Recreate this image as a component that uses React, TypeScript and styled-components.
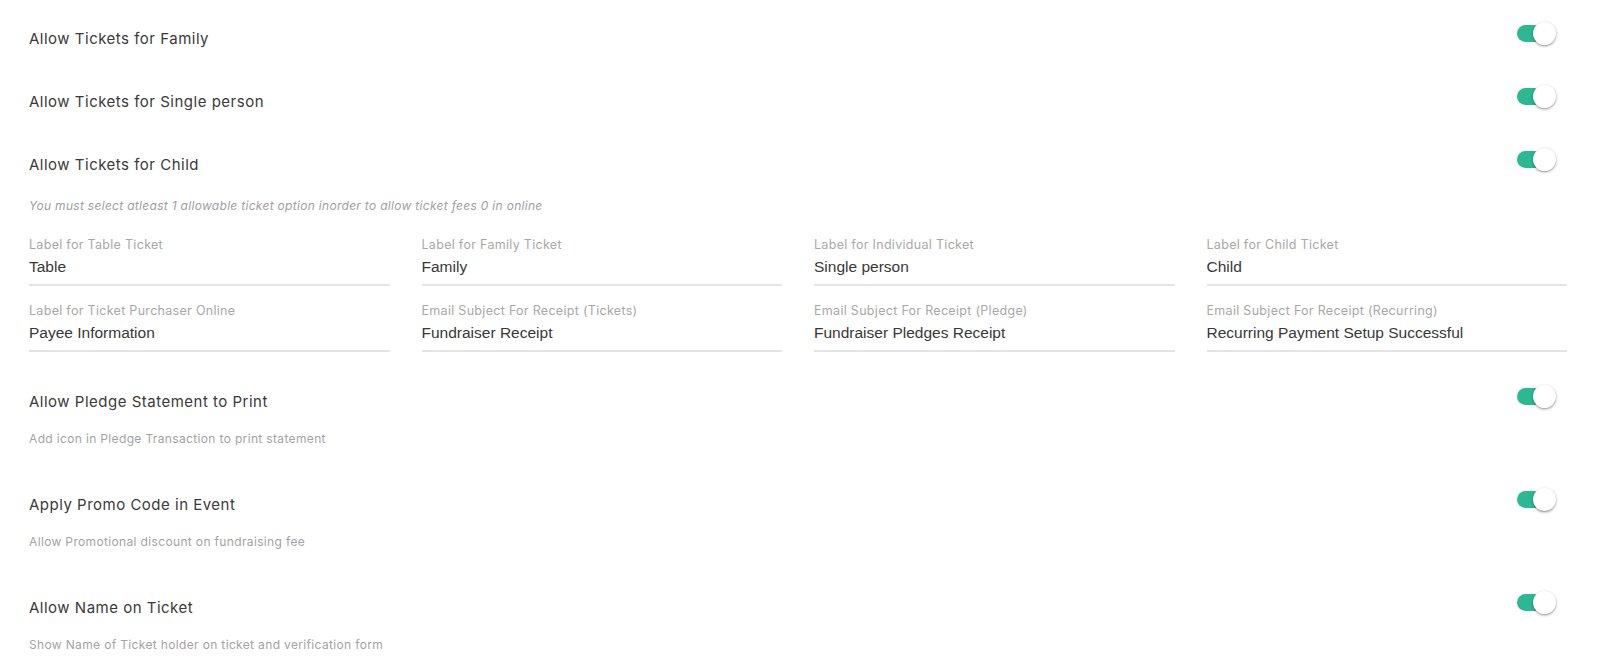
import { useState } from "react"
import styled, { createGlobalStyle } from "styled-components"

const GlobalStyle = createGlobalStyle`
  html, body {
    margin: 0;
    padding: 0;
    background: #ffffff;
  }
  body {
    font-family: Inter, "Noto Sans", sans-serif;
    color: #333;
  }
`

const Page = styled.div`
  width: 1600px;
  box-sizing: border-box;
  padding: 28px 33px 0 29px;
`

const SwitchRow = styled.div<{ $gap: number }>`
  display: flex;
  align-items: flex-start;
  justify-content: space-between;
  margin-bottom: ${(p) => p.$gap}px;
`

const RowText = styled.div`
  display: flex;
  flex-direction: column;
`

const RowTitle = styled.div`
  font-size: 15px;
  line-height: 22px;
  color: #3a3a3a;
  letter-spacing: 0.5px;
`

const RowDesc = styled.div`
  margin-top: 17px;
  font-size: 12px;
  line-height: 18px;
  color: #a3a3a3;
  letter-spacing: 0.35px;
`

const Hint = styled.div`
  font-size: 12px;
  line-height: 18px;
  font-style: italic;
  color: #a0a0a0;
  letter-spacing: 0.3px;
  margin-bottom: 21px;
`

const Track = styled.button<{ $on: boolean }>`
  position: relative;
  flex: none;
  width: 34px;
  height: 17px;
  margin: -3px 16px 0 0;
  padding: 0;
  border: none;
  border-radius: 9px;
  background: ${(p) => (p.$on ? "#2db894" : "#c8c8c8")};
  cursor: pointer;
`

const Thumb = styled.span<{ $on: boolean }>`
  position: absolute;
  top: -3px;
  left: ${(p) => (p.$on ? "16px" : "-5px")};
  width: 23px;
  height: 23px;
  border-radius: 50%;
  background: #fff;
  box-shadow: 0 1px 3px rgba(0, 0, 0, 0.35), 0 1px 1px rgba(0, 0, 0, 0.12);
  transition: left 0.15s;
`

const FieldGrid = styled.div`
  display: grid;
  grid-template-columns: repeat(4, 1fr);
  column-gap: 32px;
  row-gap: 16px;
  margin-bottom: 39px;
`

const Field = styled.label`
  display: flex;
  flex-direction: column;
  border-bottom: 2px solid #e4e4e4;
  padding-bottom: 7px;
`

const FieldLabel = styled.span`
  font-size: 12.5px;
  line-height: 18px;
  color: #a8a8a8;
  letter-spacing: 0.3px;
`

const FieldInput = styled.input`
  margin-top: 3px;
  border: none;
  outline: none;
  padding: 0;
  height: 20px;
  font-family: "Liberation Sans", Arial, sans-serif;
  font-size: 15.5px;
  color: #383838;
  background: transparent;
`

function Toggle({ initial = true }: { initial?: boolean }) {
  const [on, setOn] = useState(initial)
  return (
    <Track $on={on} role="switch" aria-checked={on} onClick={() => setOn(!on)}>
      <Thumb $on={on} />
    </Track>
  )
}

const ticketSwitches = [
  "Allow Tickets for Family",
  "Allow Tickets for Single person",
  "Allow Tickets for Child",
]

const fields = [
  { label: "Label for Table Ticket", value: "Table" },
  { label: "Label for Family Ticket", value: "Family" },
  { label: "Label for Individual Ticket", value: "Single person" },
  { label: "Label for Child Ticket", value: "Child" },
  { label: "Label for Ticket Purchaser Online", value: "Payee Information" },
  { label: "Email Subject For Receipt (Tickets)", value: "Fundraiser Receipt" },
  { label: "Email Subject For Receipt (Pledge)", value: "Fundraiser Pledges Receipt" },
  { label: "Email Subject For Receipt (Recurring)", value: "Recurring Payment Setup Successful" },
]

const extraSwitches = [
  { title: "Allow Pledge Statement to Print", desc: "Add icon in Pledge Transaction to print statement" },
  { title: "Apply Promo Code in Event", desc: "Allow Promotional discount on fundraising fee" },
  { title: "Allow Name on Ticket", desc: "Show Name of Ticket holder on ticket and verification form" },
]

export default function App() {
  return (
    <>
      <GlobalStyle />
      <Page>
        {ticketSwitches.map((title, i) => (
          <SwitchRow key={title} $gap={i === ticketSwitches.length - 1 ? 21 : 41}>
            <RowText>
              <RowTitle>{title}</RowTitle>
            </RowText>
            <Toggle />
          </SwitchRow>
        ))}
        <Hint>You must select atleast 1 allowable ticket option inorder to allow ticket fees 0 in online</Hint>
        <FieldGrid>
          {fields.map((f) => (
            <Field key={f.label}>
              <FieldLabel>{f.label}</FieldLabel>
              <FieldInput defaultValue={f.value} />
            </Field>
          ))}
        </FieldGrid>
        {extraSwitches.map((s) => (
          <SwitchRow key={s.title} $gap={46}>
            <RowText>
              <RowTitle>{s.title}</RowTitle>
              <RowDesc>{s.desc}</RowDesc>
            </RowText>
            <Toggle />
          </SwitchRow>
        ))}
      </Page>
    </>
  )
}
